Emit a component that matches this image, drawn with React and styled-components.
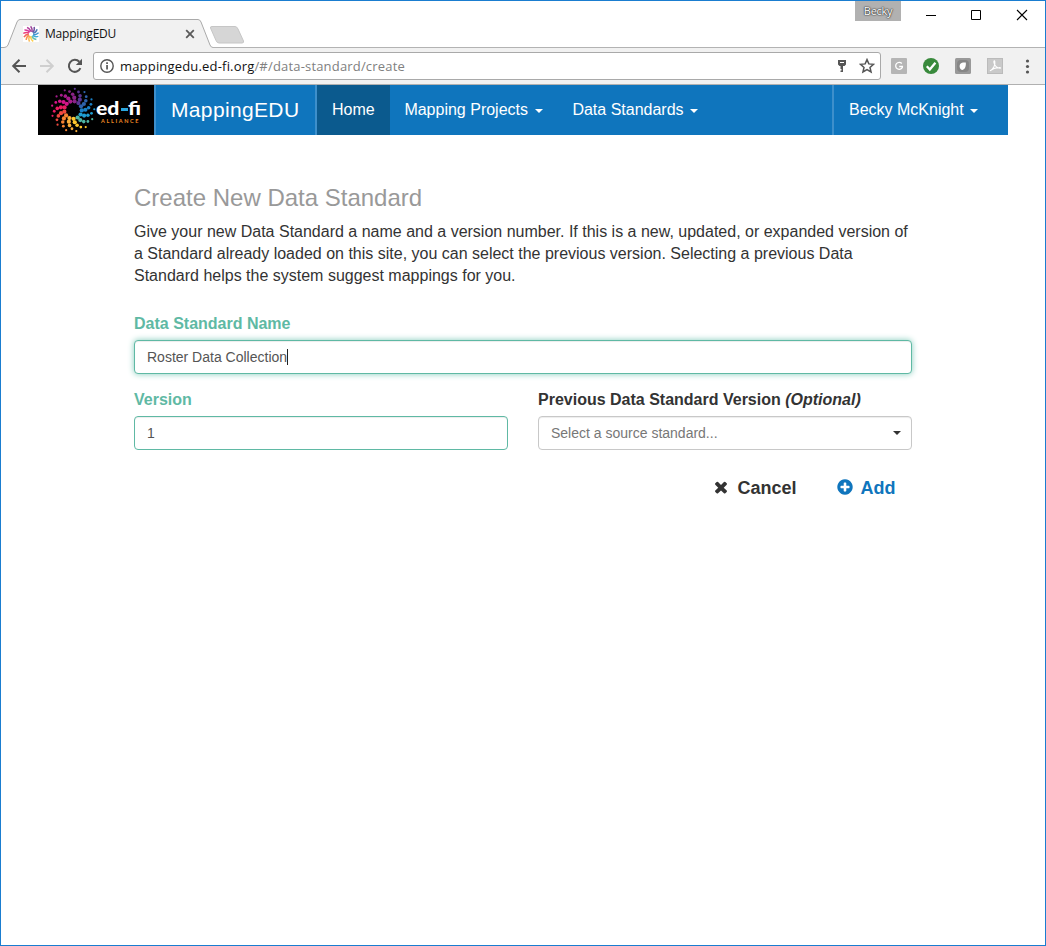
import React from "react";
import styled, { createGlobalStyle } from "styled-components";

const sans = `"Liberation Sans", Arial, sans-serif`;
const chromeFont = `"Open Sans", "Noto Sans", sans-serif`;

const GlobalStyle = createGlobalStyle`
  *, *::before, *::after { box-sizing: border-box; }
  body { margin: 0; background: #fff; font-family: ${sans}; color: #333; }
  svg { display: block; flex: none; }
`;

const Window = styled.div`
  width: 1046px;
  height: 946px;
  border: 1px solid #1a7dd0;
  background: #fff;
  overflow: hidden;
`;

const TabStrip = styled.div`
  height: 47px;
  display: flex;
  align-items: flex-end;
  position: relative;
`;

const Tab = styled.div`
  position: relative;
  width: 212px;
  height: 29px;
`;

const TabShape = styled.svg`
  position: absolute;
  left: 0;
  top: 0;
`;

const TabContent = styled.div`
  position: relative;
  display: flex;
  align-items: center;
  height: 28px;
  padding: 1px 0 0 22px;
  font: 12px/16px ${chromeFont};
  color: #111;
`;

const TabTitle = styled.span`
  width: 140px;
  margin-left: 6px;
  letter-spacing: -0.2px;
`;

const StripLine = styled.div`
  flex: 1;
  align-self: stretch;
  display: flex;
  align-items: flex-end;
  border-bottom: 1px solid #b3b3b3;
`;

const NewTab = styled.svg`
  margin: 0 0 2px -4px;
`;

const WindowControls = styled.div`
  position: absolute;
  right: 0;
  top: 0;
  display: flex;
  align-items: flex-start;
`;

const UserBadge = styled.div`
  width: 46px;
  height: 20px;
  margin-right: 24px;
  background: #b1b1b1;
  color: #fff;
  text-align: center;
  font: 11px/20px ${chromeFont};
  letter-spacing: -0.3px;
  text-shadow: 0 0 1px #333, 0 0 1px #333, 0 0 2px #444;
`;

const Toolbar = styled.div`
  height: 37px;
  display: flex;
  align-items: center;
  background: #f1f1f1;
  border-bottom: 1px solid #b0b0b0;
  padding: 0 10px 0 10px;
`;

const NavIcons = styled.div`
  display: flex;
  gap: 12px;
  width: 82px;
`;

const UrlField = styled.div`
  display: flex;
  align-items: center;
  width: 788px;
  height: 28px;
  background: #fff;
  border: 1px solid #a9a9a9;
  border-radius: 3px;
  padding: 0 5px 0 6px;
`;

const Url = styled.div`
  flex: 1;
  margin-left: 6px;
  font: 13px/20px ${chromeFont};
  letter-spacing: 0.18px;
  color: #808080;
  b { font-weight: 400; color: #111; }
`;

const FieldIcons = styled.div`
  display: flex;
  align-items: center;
  gap: 12px;
`;

const Extensions = styled.div`
  display: flex;
  align-items: center;
  gap: 16px;
  margin-left: 10px;
`;

const Navbar = styled.nav`
  display: flex;
  width: 970px;
  height: 50px;
  margin-left: 37px;
  background: #0f75bd;
  color: #fff;
  font-size: 16px;
`;

const LogoBox = styled.div`
  width: 116px;
  height: 50px;
  background: #000;
`;

const Brand = styled.div`
  width: 163px;
  padding-left: 15px;
  border-left: 2px solid #3d8fcb;
  border-right: 2px solid #3d8fcb;
  font-size: 21px;
  line-height: 49px;
  letter-spacing: 0.35px;
  white-space: nowrap;
`;

const NavItem = styled.div`
  display: flex;
  align-items: center;
  width: ${(p) => p.$w}px;
  padding: 0 0 1px ${(p) => p.$inset ?? 15}px;
  background: ${(p) => (p.$active ? "#0b5a8e" : "transparent")};
  border-left: ${(p) => (p.$divided ? "2px solid #3d8fcb" : "0")};
  margin-left: ${(p) => (p.$divided ? "auto" : "0")};
  white-space: nowrap;
`;

const Caret = styled.span`
  flex: none;
  width: 0;
  height: 0;
  border: 4px solid transparent;
  border-top-color: currentColor;
  border-bottom: 0;
  margin: 3px 0 0 6.7px;
`;

const Main = styled.main`
  width: 778px;
  margin: 50px 0 0 133px;
`;

const Title = styled.h1`
  margin: 0 0 10px;
  font-size: 24px;
  line-height: 26px;
  font-weight: 400;
  color: #999;
`;

const Intro = styled.p`
  margin: 0 0 26px;
  font-size: 16px;
  line-height: 22px;
  white-space: nowrap;
`;

const Field = styled.div`
  flex: 1;
`;

const Label = styled.label`
  display: block;
  margin-bottom: 5px;
  font-size: 16px;
  line-height: 22px;
  font-weight: 700;
  color: ${(p) => (p.$valid ? "#5fb9a4" : "#333")};
`;

const Control = styled.div`
  display: flex;
  align-items: center;
  height: 34px;
  padding: 0 10px 0 12px;
  border: 1px solid ${(p) => (p.$valid ? "#5fb9a4" : "#c8c8c8")};
  border-radius: 4px;
  background: #fff;
  font-size: 14px;
  color: ${(p) => (p.$placeholder ? "#777" : "#555")};
  box-shadow: inset 0 1px 1px rgba(0, 0, 0, 0.075)
    ${(p) => (p.$focus ? ", 0 0 6px #82cbbb" : "")};
`;

const TextCursor = styled.span`
  width: 1px;
  height: 16px;
  background: #222;
`;

const SelectCaret = styled(Caret)`
  margin: 0 0 0 auto;
  color: #333;
`;

const Row = styled.div`
  display: flex;
  gap: 30px;
  margin-top: 15px;
`;

const Actions = styled.div`
  display: flex;
  justify-content: flex-end;
  gap: 39px;
  margin-top: 27px;
  padding-right: 16.5px;
`;

const Action = styled.button`
  display: flex;
  align-items: center;
  gap: 7px;
  padding: 0;
  border: 0;
  background: none;
  font: 700 18px/22px ${sans};
  color: ${(p) => (p.$primary ? "#0f75bd" : "#333")};
  svg { margin-top: -2px; }
`;

const armColors = [
  "#8a2487", "#5a3592", "#2f63ad", "#1a80c6", "#1f9fd4", "#4fb6a4", "#fdc72e",
  "#f9ad3a", "#f58232", "#ef4a3f", "#e81c63", "#d4158a", "#a81c8c",
];

const radii = [8.8, 12.4, 15.8, 18.8, 21.3];
const sizes = [2.1, 2.1, 1.8, 1.4, 1.1];

function Swirl() {
  return armColors.map((color, i) => (
    <g key={i} fill={color}>
      {radii.map((r, j) => {
        const a = ((i * 360) / armColors.length - 80 - j * j * 1.3 - j * 3) * (Math.PI / 180);
        return <circle key={j} cx={r * Math.cos(a)} cy={r * Math.sin(a)} r={sizes[j]} />;
      })}
    </g>
  ));
}

function Logo() {
  return (
    <svg width="116" height="50" viewBox="0 0 116 50">
      <g transform="translate(35 25)"><Swirl /></g>
      <g fontFamily="Lato, sans-serif" fontWeight="900" fontSize="19.5" fill="#fff">
        <text x="58" y="30" textLength="23.500" lengthAdjust="spacingAndGlyphs">ed</text>
        <text x="90" y="30" textLength="13" lengthAdjust="spacingAndGlyphs">fi</text>
      </g>
      <rect x="83" y="23" width="7" height="3" fill="#2aa6de" />
      <text x="63" y="37.500" fontSize="5.500" fontWeight="700" fontFamily="Lato, sans-serif" fill="#f08a24" textLength="37.500">ALLIANCE</text>
    </svg>
  );
}

function Favicon() {
  return (
    <svg width="16" height="16" viewBox="-8 -8 16 16">
      <rect x="-8" y="-8" width="16" height="16" fill="#fff" />
      {armColors.map((c, i) => (
        <path key={i} d="M0 -2.200 Q0.600 -5 -2.500 -7.300" transform={`rotate(${(i * 360) / 13 + 16})`} stroke={c} strokeWidth="1.500" strokeOpacity=".85" fill="none" />
      ))}
    </svg>
  );
}

const iconStroke = { fill: "none", stroke: "#555", strokeWidth: 2 };

export default function App() {
  return (
    <Window>
      <GlobalStyle />
      <TabStrip>
        <Tab>
          <TabShape width="212" height="29">
            <path d="M0 28.500H3Q6 28.500 7 26L16 3Q17 .5 19 .5H197Q199 .5 200 3L209 26Q210 28.500 212 28.500V29H0Z" fill="#f1f1f1" />
            <path d="M0 28.500H3Q6 28.500 7 26L16 3Q17 .5 19 .5H197Q199 .5 200 3L209 26Q210 28.500 212 28.500" fill="none" stroke="#aaa" />
          </TabShape>
          <TabContent>
            <Favicon />
            <TabTitle>MappingEDU</TabTitle>
            <svg width="10" height="10" viewBox="0 0 10 10"><path d="M1.200 1.200l7.600 7.600M8.800 1.200L1.200 8.800" stroke="#5a5a5a" strokeWidth="1.800" /></svg>
          </TabContent>
        </Tab>
        <StripLine>
          <NewTab width="36" height="19" viewBox="0 0 36 19">
            <path d="M3 .5H26Q28 .5 29 3L34.500 15Q35 17 33 17H10Q8 17 7 14.500L1.500 2Q1 .5 3 .5Z" fill="#d6d6d6" stroke="#c6c6c6" />
          </NewTab>
        </StripLine>
        <WindowControls>
          <UserBadge>Becky</UserBadge>
          <svg width="120" height="28" viewBox="925 1 120 28" fill="none" stroke="#000">
            <path d="M926 15.500h10M971.500 10.500h9v9h-9z" />
            <path d="M1017 10l10 10M1027 10l-10 10" strokeWidth="1.100" />
          </svg>
        </WindowControls>
      </TabStrip>
      <Toolbar>
        <NavIcons>
          <svg width="16" height="16" viewBox="0 0 16 16" {...iconStroke}><path d="M15 8H2.500M8.500 1.700L2.200 8l6.300 6.300" /></svg>
          <svg width="16" height="16" viewBox="0 0 16 16" {...iconStroke} stroke="#cfcfcf"><path d="M1 8h12.500M7.500 1.700L13.800 8l-6.300 6.300" /></svg>
          <svg width="16" height="16" viewBox="0 0 16 16" {...iconStroke}><path d="M13.400 10.200A6 6 0 1 1 12.300 3.800" /><path d="M15 .8V7H8.800z" fill="#555" stroke="none" /></svg>
        </NavIcons>
        <UrlField>
          <svg width="14" height="14" viewBox="0 0 14 14"><circle cx="7" cy="7" r="6.200" fill="none" stroke="#555" strokeWidth="1.400" /><path d="M6.200 6h1.700v4.500H6.200zM6.200 3.300h1.700v1.700H6.200z" fill="#555" /></svg>
          <Url><b>mappingedu.ed-fi.org</b>/#/data-standard/create</Url>
          <FieldIcons>
            <svg width="10" height="14" viewBox="0 0 10 14"><path d="M1 1h8v4.500L7.500 7H6v6H3.500v-1.500h1V10h-1V7H2.500L1 5.500z" fill="#555" /><path d="M3 3.500h4" stroke="#fff" /></svg>
            <svg width="16" height="16" viewBox="0 0 16 16"><path d="M8 1.600l1.850 4.300 4.650.4-3.500 3.100 1.050 4.600L8 11.600 3.950 14 5 9.400 1.500 6.300l4.650-.4z" fill="none" stroke="#555" strokeWidth="1.500" /></svg>
          </FieldIcons>
        </UrlField>
        <Extensions>
          <svg width="16" height="16" viewBox="0 0 16 16"><rect width="16" height="16" rx="1" fill="#b5b5b5" /><path d="M10.800 5.500A3.500 3.500 0 1 0 11.400 9.200V8.500H8.200" fill="none" stroke="#fff" strokeWidth="1.300" /></svg>
          <svg width="16" height="16" viewBox="0 0 16 16"><circle cx="8" cy="8" r="8" fill="#398a3c" /><path d="M3.800 8.300l3 3.200 5.600-6.800" fill="none" stroke="#fff" strokeWidth="2.300" /></svg>
          <svg width="16" height="16" viewBox="0 0 16 16"><rect width="16" height="16" rx="1.500" fill="#999" /><rect x="2" y="2" width="12" height="12" rx="4" fill="#868686" /><path d="M4.800 9.500C4 6 6 4 10.800 4.500c.4 3.500-.8 6.800-3.300 7.500-1.500 0-2.300-1-2.700-2.500z" fill="#fff" /></svg>
          <svg width="16" height="16" viewBox="0 0 16 16"><rect x=".5" y=".5" width="15" height="15" fill="#c9c9c9" stroke="#bbb" /><path d="M3 12.800C6.500 11 8.500 7 7.800 3.500 7.500 2 6.500 3 7 4.800c.8 3 3 5 6 5.400 1 .2.800-.8-1-.7-3 .1-6.500 1.200-9 3.300z" fill="none" stroke="#fff" strokeWidth="1.100" /></svg>
          <svg width="16" height="16" viewBox="0 0 16 16" fill="#555"><circle cx="8.500" cy="3" r="1.600" /><circle cx="8.500" cy="8.500" r="1.600" /><circle cx="8.500" cy="14" r="1.600" /></svg>
        </Extensions>
      </Toolbar>
      <Navbar>
        <LogoBox><Logo /></LogoBox>
        <Brand>MappingEDU</Brand>
        <NavItem $w={73} $active>Home</NavItem>
        <NavItem $w={168} $inset={14.4}>Mapping Projects<Caret /></NavItem>
        <NavItem $w={155} $inset={14.4}>Data Standards<Caret /></NavItem>
        <NavItem $w={176} $divided>Becky McKnight<Caret /></NavItem>
      </Navbar>
      <Main>
        <Title>Create New Data Standard</Title>
        <Intro>
          Give your new Data Standard a name and a version number. If this is a new, updated, or expanded version of<br />
          a Standard already loaded on this site, you can select the previous version. Selecting a previous Data<br />
          Standard helps the system suggest mappings for you.
        </Intro>
        <Field>
          <Label $valid>Data Standard Name</Label>
          <Control $valid $focus>Roster Data Collection<TextCursor /></Control>
        </Field>
        <Row>
          <Field>
            <Label $valid>Version</Label>
            <Control $valid>1</Control>
          </Field>
          <Field>
            <Label>Previous Data Standard Version <em>(Optional)</em></Label>
            <Control $placeholder>Select a source standard...<SelectCaret /></Control>
          </Field>
        </Row>
        <Actions>
          <Action>
            <svg width="18" height="18" viewBox="0 0 1792 1792" fill="currentColor"><path d="M1490 1322q0 40-28 68l-136 136q-28 28-68 28t-68-28l-294-294-294 294q-28 28-68 28t-68-28l-136-136q-28-28-28-68t28-68l294-294-294-294q-28-28-28-68t28-68l136-136q28-28 68-28t68 28l294 294 294-294q28-28 68-28t68 28l136 136q28 28 28 68t-28 68l-294 294 294 294q28 28 28 68z" /></svg>
            Cancel
          </Action>
          <Action $primary>
            <svg width="18" height="18" viewBox="0 0 1792 1792" fill="currentColor"><path d="M1344 960v-128q0-26-19-45t-45-19h-256v-256q0-26-19-45t-45-19h-128q-26 0-45 19t-19 45v256h-256q-26 0-45 19t-19 45v128q0 26 19 45t45 19h256v256q0 26 19 45t45 19h128q26 0 45-19t19-45v-256h256q26 0 45-19t19-45zm320-64q0 209-103 385.500t-279.500 279.500-385.500 103-385.500-103-279.500-279.500-103-385.500 103-385.500 279.500-279.500 385.500-103 385.500 103 279.500 279.500 103 385.500z" /></svg>
            Add
          </Action>
        </Actions>
      </Main>
    </Window>
  );
}
